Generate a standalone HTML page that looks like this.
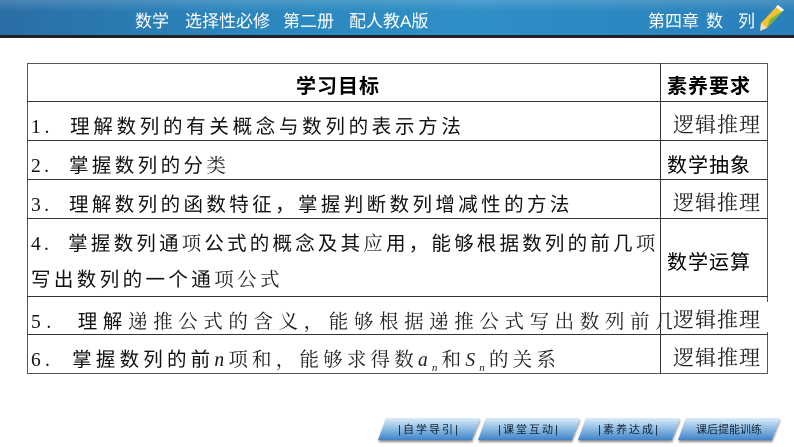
<!DOCTYPE html>
<html><head><meta charset="utf-8"><style>
*{margin:0;padding:0;box-sizing:border-box}
body{width:794px;height:447px;background:#fff;position:relative;overflow:hidden;font-family:"Liberation Sans","Noto Sans CJK SC",sans-serif}
.bar{position:absolute;left:0;top:0;width:794px;height:35px;background:linear-gradient(90deg,#2a6ea6 0%,#2b86bd 30%,#2e8fc6 60%,#2a7fb9 100%)}
.bar:after{content:"";position:absolute;left:0;right:0;top:0;height:12px;background:linear-gradient(rgba(255,255,255,.15),rgba(255,255,255,0))}
.line{position:absolute;left:0;top:35px;width:794px;height:3px;background:#222}
.ht{position:absolute;top:7px;color:#fff;font-size:17px;font-family:"Liberation Sans","Noto Sans CJK SC",sans-serif;white-space:nowrap}
.tb{position:absolute;border:1px solid #555}
.h{position:absolute;height:1px;background:#333;left:27px;width:741px}
.t{position:absolute;font-size:19.5px;letter-spacing:3.4px;white-space:nowrap;color:#111;font-family:"Liberation Serif","Noto Sans CJK SC",serif}
.s{font-family:"Liberation Serif","Noto Serif CJK SC",serif;color:#222}
.r{position:absolute;font-size:20px;white-space:nowrap;letter-spacing:1px}
.btn{position:absolute;top:418px;height:22px;width:94px;transform:skewX(-20deg);background:linear-gradient(#dcebf8,#8cbbe3 50%,#3d84c8);box-shadow:1px 2px 2px #888}
.bt{position:absolute;top:421px;font-size:11px;color:#123;width:94px;text-align:center;letter-spacing:2px}
</style></head><body>
<div class="bar"></div><div class="line"></div>
<div class="ht" style="left:135px">数学</div>
<div class="ht" style="left:185px">选择性必修</div>
<div class="ht" style="left:283px">第二册</div>
<div class="ht" style="left:349px">配人教A版</div>
<div class="ht" style="left:648px">第四章</div>
<div class="ht" style="left:706px">数</div>
<div class="ht" style="left:738px">列</div>
<svg style="position:absolute;left:758px;top:3px" width="28" height="30" viewBox="0 0 28 30"><path d="M20 2 L26 7 L9 25 L3 20 Z" fill="#f2c230"/><path d="M20 2 L26 7 L24 9 L18 4Z" fill="#fff"/><path d="M3 20 L9 25 L2 28 Z" fill="#f4e1b0"/><path d="M12 16 L26 7 L9 25Z" fill="#7cb342"/></svg>

<div class="tb" style="left:27px;top:63px;width:741px;height:311px"></div>
<div style="position:absolute;left:660px;top:63px;width:1px;height:311px;background:#333"></div>
<div class="h" style="top:101px"></div><div class="h" style="top:140px"></div><div class="h" style="top:179px"></div><div class="h" style="top:218px"></div><div class="h" style="top:296px"></div><div class="h" style="top:334px"></div>

<div class="r" style="left:296px;top:70px;font-weight:bold">学习目标</div>
<div class="r" style="left:667px;top:70px;font-weight:bold">素养要求</div>

<div class="t" style="left:31px;top:110px;letter-spacing:3.7px">1.&nbsp; 理解数列的有关概念与数列的表示方法</div>
<div class="t" style="left:31px;top:149px">2.&nbsp; 掌握数列的分<span class="s">类</span></div>
<div class="t" style="left:31px;top:188px">3.&nbsp; 理解数列的函数特征，掌握判断数列增减性的方法</div>
<div class="t" style="left:31px;top:227px;letter-spacing:3.2px">4.&nbsp; 掌握数列通<span class="s">项</span>公式的概念及其<span class="s">应</span>用，能够根据数列的前几<span class="s">项</span></div>
<div class="t" style="left:31px;top:263px">写出数列的一个通<span class="s">项公式</span></div>
<div class="t" style="left:31px;top:305px;letter-spacing:5.6px">5.&nbsp; 理解<span class="s">递推公式的含义，能够根据递推公式写出数列前几项</span></div>
<div class="t" style="left:31px;top:343px;letter-spacing:4.2px">6.&nbsp; 掌握数列的前<i>n</i><span class="s">项和，能够求得数<i>a<sub style="font-size:11px">n</sub></i>和<i>S<sub style="font-size:11px">n</sub></i>的关系</span></div>

<div style="position:absolute;left:672px;top:302px;width:100px;height:30px;background:#fff"></div>
<div class="r s" style="left:673px;top:109px;font-size:21px">逻辑推理</div>
<div class="r" style="left:667px;top:149px">数学抽象</div>
<div class="r s" style="left:673px;top:187px;font-size:21px">逻辑推理</div>
<div class="r" style="left:667px;top:246px">数学运算</div>
<div class="r s" style="left:673px;top:304px;font-size:21px">逻辑推理</div>
<div class="r s" style="left:673px;top:342px;font-size:21px">逻辑推理</div>

<div class="btn" style="left:382px"></div><div class="btn" style="left:482px"></div><div class="btn" style="left:582px"></div><div class="btn" style="left:682px"></div>
<div class="bt" style="left:382px">|自学导引|</div>
<div class="bt" style="left:482px">|课堂互动|</div>
<div class="bt" style="left:582px">|素养达成|</div>
<div class="bt" style="left:682px;letter-spacing:0">课后提能训练</div>
</body></html>
